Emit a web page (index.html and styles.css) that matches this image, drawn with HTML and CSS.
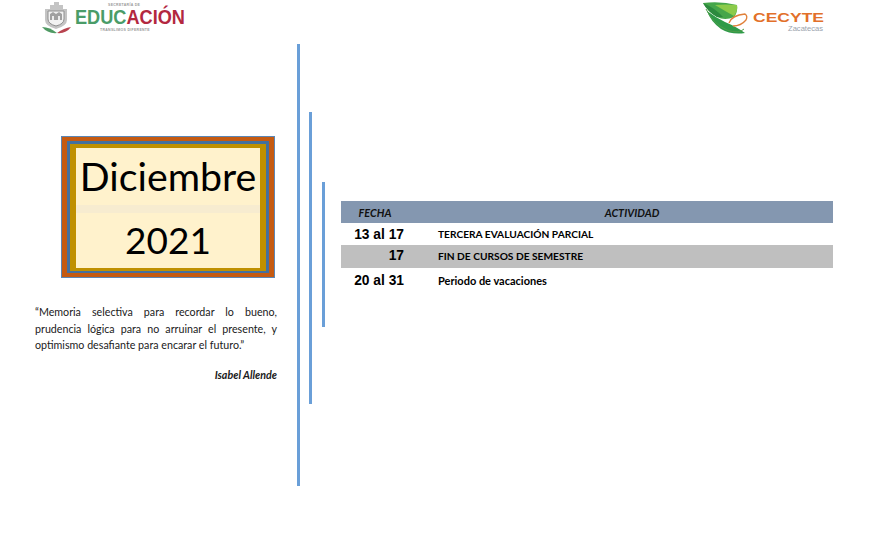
FILE: index.html
```html
<!DOCTYPE html>
<html lang="es">
<head>
    <meta charset="UTF-8">
    <meta name="viewport" content="width=device-width, initial-scale=1.0">
    <title>Calendario Diciembre 2021</title>
    <link rel="stylesheet" href="styles.css">
</head>
<body>
    <header class="top-logos">
        <svg class="logo-edu" width="150" height="34" viewBox="0 0 150 34">
            <!-- crest -->
            <path d="M3 8 L8 8 L8 4 L12 4 L12 1 L17 1 L17 4 L21 4 L21 8 L25 8 L25 19 Q25 25 14 28 Q3 25 3 19 Z" fill="#c4c4c4"/>
            <path d="M6 10 H22 V18 Q22 23 14 25 Q6 23 6 18 Z" fill="#f2f2f2" stroke="#909090" stroke-width="1"/>
            <path d="M8 13 L11 11 L14 13 L17 11 L20 13 V19 H8 Z" fill="#a0a0a0"/>
            <path d="M10 15 H12 V19 H10 Z M16 15 H18 V19 H16 Z" fill="#ececec"/>
            <!-- swooshes under crest -->
            <path d="M0 26 Q8 26 15 32 Q6 33 0 26 Z" fill="#4f9a63"/>
            <path d="M29 26 Q22 27 15 32 Q24 33 29 26 Z" fill="#b8434f"/>
            <text class="edu-small" x="66" y="5">SECRETARÍA DE</text>
            <text class="edu-word" x="33" y="23" textLength="110" lengthAdjust="spacingAndGlyphs"><tspan fill="#4a9c68">EDUC</tspan><tspan fill="#b3283f">ACIÓN</tspan></text>
            <text class="edu-small" x="58" y="30">TRANSLIMOS DIFERENTE</text>
        </svg>
        <svg class="logo-cecyte" width="124" height="34" viewBox="0 0 124 34">
            <!-- leaves and orbit -->
            <path d="M2 1 Q20 -1 36 3 Q37 10 33 15 Q24 19 16 15 Q7 10 2 1 Z" fill="#45a64a"/>
            <path d="M14 3 Q24 2 36 3 Q37 9 33 14 Q24 9 14 3 Z" fill="#8ccb4a"/>
            <path d="M2 1 Q14 6 22 15 L16 15 Q7 10 2 1 Z" fill="#2c8a3e"/>
            <path d="M6 9 Q14 15 24 20 Q36 25 44 31 Q30 33 20 27 Q10 20 6 9 Z" fill="#2f9a48"/>
            <path d="M5 7 Q12 22 26 28 Q38 32 43 27" fill="none" stroke="#4e9e4a" stroke-width="1"/>
            <path d="M28 21 Q31 13 44 12 Q47 14 45 18 Q40 24 32 24" fill="none" stroke="#e0803a" stroke-width="1.300"/>
            <text class="cecyte-word" x="52" y="20" textLength="71" lengthAdjust="spacingAndGlyphs">CECYTE</text>
            <text class="cecyte-small" x="87" y="28.500" textLength="35" lengthAdjust="spacingAndGlyphs">Zacatecas</text>
        </svg>
    </header>

    <main class="sheet">
        <section class="left-col">
            <div class="frame-orange">
                <div class="frame-blue">
                    <div class="frame-gold">
                        <div class="month-box">
                            <div class="month-cell">Diciembre</div>
                            <div class="month-band"></div>
                            <div class="year-cell">2021</div>
                        </div>
                    </div>
                </div>
            </div>
            <p class="quote">“Memoria selectiva para recordar lo bueno, prudencia lógica para no arruinar el presente, y optimismo desafiante para encarar el futuro.”</p>
            <p class="author">Isabel Allende</p>
        </section>

        <div class="rule rule-long"></div>
        <div class="rule rule-mid"></div>
        <div class="rule rule-short"></div>

        <section class="right-col">
            <table class="activities">
                <thead>
                    <tr>
                        <th class="col-date">FECHA</th>
                        <th class="col-what">ACTIVIDAD</th>
                    </tr>
                </thead>
                <tbody>
                    <tr>
                        <td class="date">13 al 17</td>
                        <td class="what">TERCERA EVALUACIÓN PARCIAL</td>
                    </tr>
                    <tr class="shaded">
                        <td class="date">17</td>
                        <td class="what">FIN DE CURSOS DE SEMESTRE</td>
                    </tr>
                    <tr class="last-row">
                        <td class="date">20 al 31</td>
                        <td class="what">Periodo de vacaciones</td>
                    </tr>
                </tbody>
            </table>
        </section>
    </main>
</body>
</html>
```

FILE: styles.css
```css
body {
    margin: 0;
    padding: 0;
    background-color: white;
    font-family: Lato, "Open Sans", sans-serif;
    color: #1a1a1a;
}
/* Logos */
.top-logos {
    display: flex;
    justify-content: space-between;
    height: 44px;
    padding: 0 51px 0 42px;
}
.logo-edu {
    margin-top: 1px;
}
.logo-cecyte {
    margin-top: 2px;
}
.edu-word {
    font-family: "Liberation Sans", sans-serif;
    font-size: 19.500px;
    font-weight: bold;
}
.edu-small {
    font-family: "Liberation Sans", sans-serif;
    font-size: 3.500px;
    font-weight: bold;
    letter-spacing: 0.300px;
    fill: #9a9a9a;
}
.cecyte-word {
    font-family: "Liberation Sans", sans-serif;
    font-size: 12.500px;
    font-weight: bold;
    fill: #e2702a;
}
.cecyte-small {
    font-family: "Liberation Sans", sans-serif;
    font-size: 7.500px;
    fill: #9aa3ad;
}
/* Page layout */
.sheet {
    display: flex;
    align-items: flex-start;
    padding-left: 35px;
}
.left-col {
    width: 242px;
    padding-top: 92px;
}
/* Month box */
.frame-orange {
    box-sizing: border-box;
    width: 214px;
    height: 142px;
    margin-left: 26px;
    padding: 4px 5px 4px 5px;
    background-color: #c55a11;
    border: 1px solid #5b86b5;
}
.frame-blue {
    height: 100%;
    box-sizing: border-box;
    padding: 3px 3px 2px 3px;
    background-color: #44709e;
}
.frame-gold {
    height: 100%;
    box-sizing: border-box;
    padding: 4px 6px 3px 6px;
    background-color: #bf9000;
}
.month-box {
    height: 100%;
    display: flex;
    flex-direction: column;
    background-color: #fff2cc;
    color: black;
    text-align: center;
    font-size: 39.300px;
}
.month-cell {
    height: 57px;
    line-height: 56px;
}
.month-band {
    height: 8px;
    background-color: #f7ecd0;
}
.year-cell {
    flex: 1;
    line-height: 54px;
    font-size: 37px;
}
/* Quote */
.quote {
    margin: 26px 0 0 0;
    font-size: 10.700px;
    line-height: 16.500px;
    text-align: justify;
}
.author {
    margin: 13px 0 0 0;
    font-size: 10.700px;
    line-height: 16px;
    font-weight: bold;
    font-style: italic;
    text-align: right;
}
/* Vertical rules */
.rule {
    width: 3px;
    background-color: #6a9fd8;
}
.rule-long {
    height: 442px;
    margin-left: 20px;
}
.rule-mid {
    height: 292px;
    margin: 68px 0 0 9px;
}
.rule-short {
    height: 145px;
    margin: 138px 0 0 10px;
}
/* Activities table */
.right-col {
    margin: 157px 0 0 16px;
}
.activities {
    width: 492px;
    border-collapse: collapse;
    table-layout: fixed;
}
.activities th {
    height: 22px;
    padding: 0;
    background-color: #8497b0;
    font-size: 10.800px;
    font-style: italic;
    font-weight: bold;
    color: #111;
}
.activities th.col-date {
    width: 90px;
    box-sizing: border-box;
    padding-right: 22px;
}
.activities td {
    height: 22px;
    padding: 0;
}
.activities .date {
    padding-right: 27px;
    font-family: "Liberation Sans", sans-serif;
    font-size: 13.800px;
    font-weight: bold;
    color: black;
    text-align: right;
}
.activities .what {
    padding-left: 7px;
    font-size: 10.200px;
    font-weight: bold;
    color: black;
}
.activities .shaded td {
    height: 23px;
    padding-bottom: 2px;
    box-sizing: border-box;
    background-color: #bfbfbf;
}
.activities .last-row td {
    height: 25px;
}
.activities .last-row .what {
    font-size: 11px;
}
```
